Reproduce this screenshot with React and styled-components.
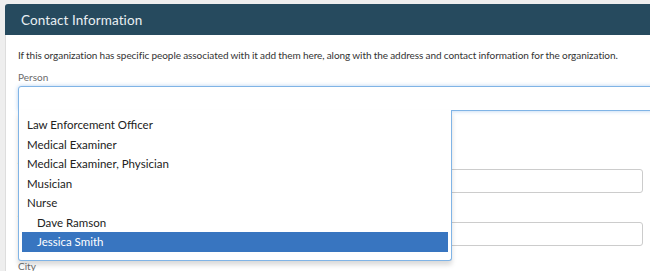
import styled, { createGlobalStyle } from 'styled-components'

const GlobalStyle = createGlobalStyle`
    html, body {
        margin: 0;
        background: #eeeeee;
        overflow: hidden;
        font-family: Lato, 'Open Sans', sans-serif;
    }
`

const Page = styled.div`
    padding: 4px 0 0 5px;
    height: 271px;
    box-sizing: border-box;
`

const Panel = styled.section`
    width: 665px;
    background: #ffffff;
    border-left: 1px solid #dddddd;
    border-radius: 3px 3px 0 0;
    min-height: 300px;
`

const PanelHeader = styled.header`
    height: 31px;
    background: #264a5e;
    border-radius: 3px 3px 0 0;
    margin-left: -1px;
    display: flex;
    align-items: center;
    padding-left: 16px;
`

const PanelTitle = styled.h2`
    margin: 0;
    font-size: 13.5px;
    font-weight: 400;
    color: #e9eff3;
    letter-spacing: 0.1px;
`

const PanelBody = styled.div`
    padding: 13px 0 0 12px;
`

const Intro = styled.p`
    margin: 0 0 9px;
    font-size: 10px;
    line-height: 14px;
    letter-spacing: -0.05px;
    word-spacing: -0.3px;
    color: #333333;
`

const Field = styled.div`
    margin-bottom: ${p => p.$gap || 14}px;
    width: ${p => p.$wide ? 650 : 625}px;
`

const Label = styled.label`
    display: block;
    font-size: 10px;
    line-height: 12px;
    color: #6b6b6b;
    margin-bottom: 3px;
`

const TextInput = styled.div`
    height: 22px;
    border: 1px solid #cccccc;
    border-radius: 3px;
    background: #ffffff;
`

const Select = styled.div`
    position: relative;
`

const SelectBox = styled.div`
    height: 23px;
    border: 1px solid #80b4e6;
    border-radius: 3px 3px 0 0;
    background: #ffffff;
    box-shadow: 0 0 4px rgba(90, 155, 225, 0.45);
`

const Dropdown = styled.div`
    position: absolute;
    top: 100%;
    left: 0;
    margin-top: -1px;
    width: 432px;
    background: #ffffff;
    border: 1px solid #80b4e6;
    border-top: none;
    border-radius: 0 0 3px 3px;
    box-shadow: 0 4px 5px rgba(0, 0, 0, 0.15);
    z-index: 5;
`

const Results = styled.ul`
    list-style: none;
    margin: 5px 3px 4px 0;
    padding: 0 0 0 3px;
    height: 141px;
    overflow: hidden;
`

const Option = styled.li`
    height: 19.5px;
    line-height: 19.5px;
    padding-left: ${p => p.$child ? 15 : 5}px;
    font-size: 11.5px;
    color: ${p => p.$active ? '#ffffff' : '#222222'};
    background: ${p => p.$active ? '#3875c0' : 'transparent'};
    white-space: nowrap;
`

const options = [
    { label: 'Law Enforcement Officer' },
    { label: 'Medical Examiner' },
    { label: 'Medical Examiner, Physician' },
    { label: 'Musician' },
    { label: 'Nurse' },
    { label: 'Dave Ramson', child: true },
    { label: 'Jessica Smith', child: true, active: true },
    { label: 'Kathy Nelson', child: true },
    { label: 'Paramedic' },
]

const App = () => {
    return (
        <Page>
            <GlobalStyle />
            <Panel>
                <PanelHeader>
                    <PanelTitle>Contact Information</PanelTitle>
                </PanelHeader>
                <PanelBody>
                    <Intro>If this organization has specific people associated with it add them here, along with the address and contact information for the organization.</Intro>
                    <Field $wide $gap={43}>
                        <Label>Person</Label>
                        <Select>
                            <SelectBox />
                            <Dropdown>
                                <Results>
                                    {options.map(o => (
                                        <Option key={o.label} $child={o.child} $active={o.active}>{o.label}</Option>
                                    ))}
                                </Results>
                            </Dropdown>
                        </Select>
                    </Field>
                    <Field>
                        <Label>Address</Label>
                        <TextInput />
                    </Field>
                    <Field>
                        <Label>Address 2</Label>
                        <TextInput />
                    </Field>
                    <Field>
                        <Label>City</Label>
                        <TextInput />
                    </Field>
                </PanelBody>
            </Panel>
        </Page>
    )
}

export default App
